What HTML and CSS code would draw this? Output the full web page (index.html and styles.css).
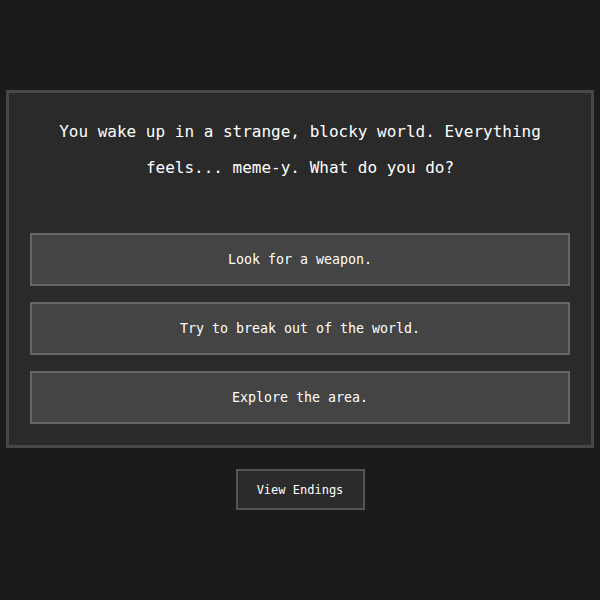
FILE: index.html
```html
<!DOCTYPE html>
<html lang="en">
<head>
  <meta charset="UTF-8" />
  <meta name="viewport" content="width=device-width, initial-scale=1.0"/>
  <title>Meme Adventure</title>
  <link rel="stylesheet" href="styles.css">
</head>
<body>
  <div id="game">
    <p id="story">You wake up in a strange, blocky world. Everything feels... meme-y. What do you do?</p>
    <div id="choices">
      <button class="choice">Look for a weapon.</button>
      <button class="choice">Try to break out of the world.</button>
      <button class="choice">Explore the area.</button>
    </div>
  </div>
  <button id="endings">View Endings</button>
</body>
</html>
```

FILE: styles.css
```css
/* Page */
body {
  font-family: "DejaVu Sans Mono", "Liberation Mono", monospace;
  margin: 0;
  height: 100vh;
  display: flex;
  flex-direction: column;
  align-items: center;
  justify-content: center;
  background-color: #1b1b1b;
  color: #fff;
}

/* Story box */
#game {
  box-sizing: border-box;
  width: 588px;
  padding: 21px;
  background-color: #2a2a2a;
  border: 3px solid #474747;
  text-align: center;
}

#story {
  margin: 0 0 47px;
  padding: 0 20px;
  font-size: 16px;
  line-height: 36px;
}

#choices {
  display: flex;
  flex-direction: column;
  gap: 16px;
}

.choice {
  height: 53px;
  font-family: inherit;
  font-size: 13.3px;
  color: #fff;
  background-color: #444;
  border: 2px solid #666;
  cursor: pointer;
}

.choice:hover {
  background-color: #505050;
}

#endings {
  margin-top: 21px;
  width: 129px;
  height: 41px;
  font-family: inherit;
  font-size: 12px;
  color: #fff;
  background-color: #2b2b2b;
  border: 2px solid #555;
  cursor: pointer;
}
```
